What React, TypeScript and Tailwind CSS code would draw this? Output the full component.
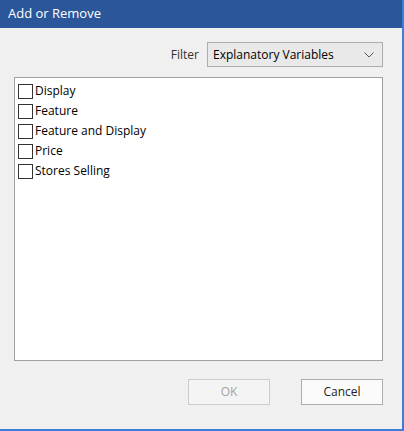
const items = ['Display', 'Feature', 'Feature and Display', 'Price', 'Stores Selling'];

function CheckRow({ label }: { label: string }) {
  return (
    <label className="flex h-[20px] items-center">
      <span className="ml-[3px] mr-[2px] h-[15px] w-[15px] shrink-0 border border-[#333333] bg-white" />
      <span>{label}</span>
    </label>
  );
}

export default function App() {
  return (
    <div
      className="flex h-[431px] w-[404px] flex-col border-b-2 border-r-2 border-[#3b7dd8] bg-[#f0f0f0] text-[12px] text-black"
      style={{ fontFamily: '"Open Sans", "Noto Sans", sans-serif' }}
    >
      {/* title bar */}
      <div className="flex h-[28px] shrink-0 items-center bg-[#2b579a] pl-[8px] text-[13px] text-white">
        Add or Remove
      </div>

      <div className="flex flex-1 flex-col pl-[14px] pr-[19px]">
        {/* filter */}
        <div className="mt-[14px] flex items-center justify-end">
          <span className="mr-[8px] text-[#333333]">Filter</span>
          <div className="flex h-[25px] w-[176px] items-center justify-between border border-[#adadad] bg-[#e9e9e9] pl-[5px] pr-[8px]">
            <span>Explanatory Variables</span>
            <svg width="10" height="6" viewBox="0 0 10 6" fill="none">
              <path d="M0.5 0.5 L5 5 L9.5 0.5" stroke="#555555" strokeWidth="1" />
            </svg>
          </div>
        </div>

        {/* variable list */}
        <div className="mt-[10px] h-[284px] border border-[#a0a0a0] bg-white pt-[3px]">
          {items.map((it) => (
            <CheckRow key={it} label={it} />
          ))}
        </div>

        {/* buttons */}
        <div className="mt-[18px] flex justify-end gap-[31px]">
          <button className="h-[26px] w-[82px] border border-[#cccccc] bg-[#f4f4f4] text-[#a3a3a3]">OK</button>
          <button className="h-[26px] w-[82px] border border-[#adadad] bg-[#fbfbfb] text-[#222222]">Cancel</button>
        </div>
      </div>
    </div>
  );
}
